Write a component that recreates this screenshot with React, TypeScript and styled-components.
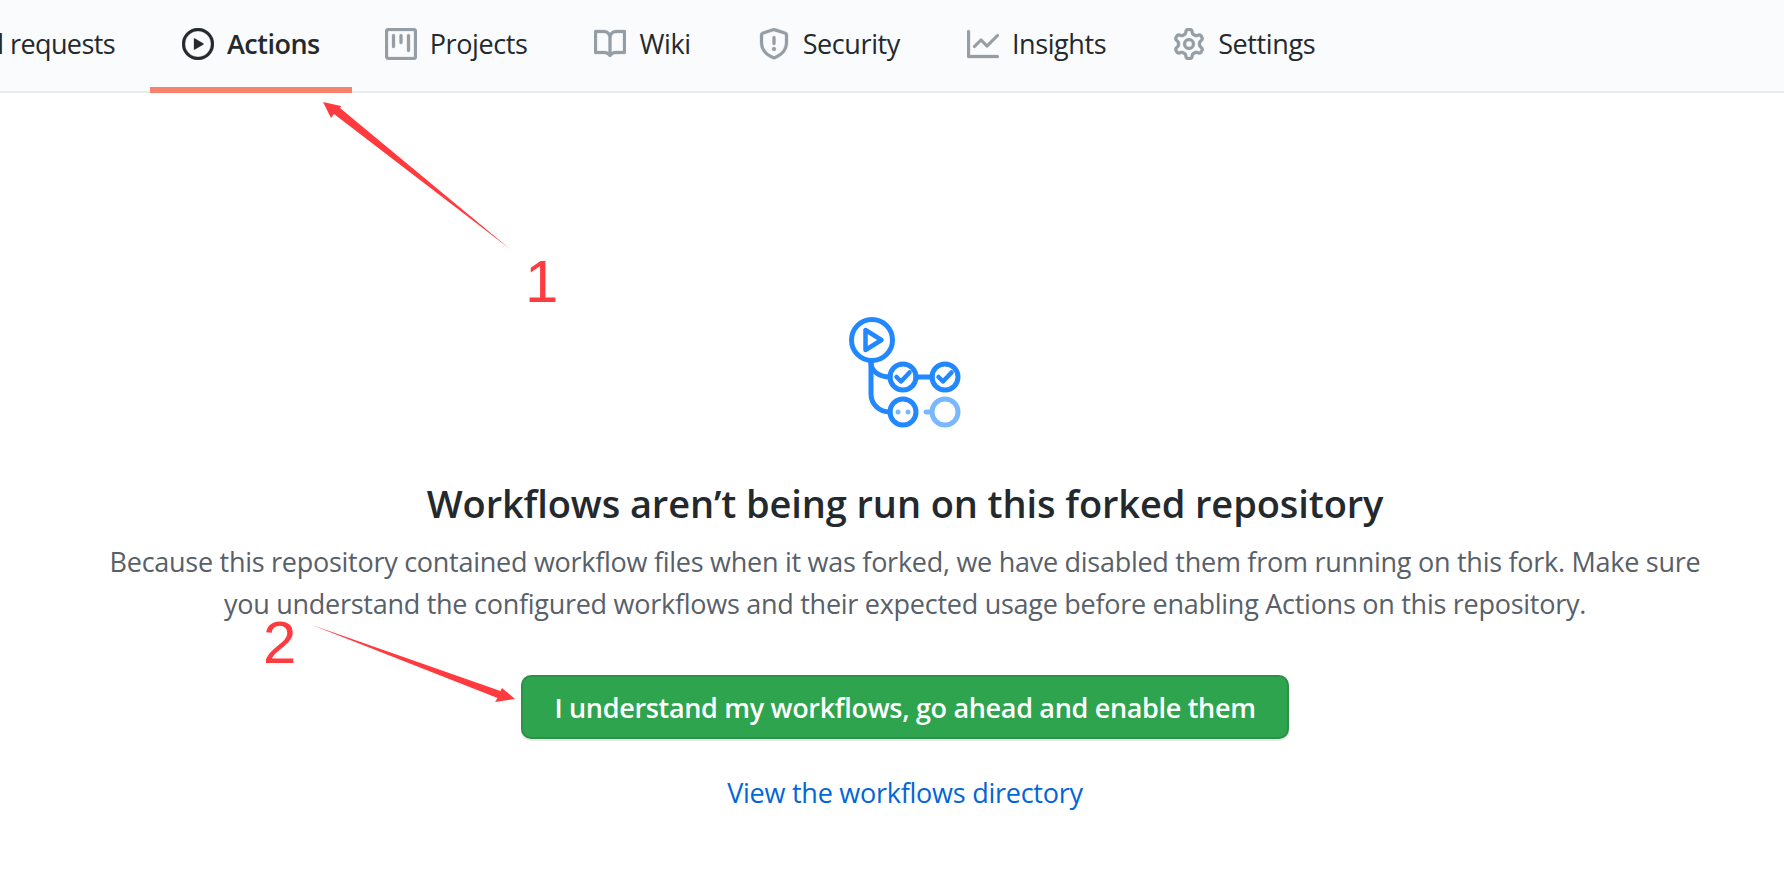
import styled, { createGlobalStyle } from "styled-components";

const GlobalStyle = createGlobalStyle`
  html, body {
    margin: 0;
    padding: 0;
    background: #fff;
  }
  body {
    font-family: "Open Sans", "Noto Sans", sans-serif;
    color: #24292e;
  }
`;

const paths = {
  play: "M1.5 8a6.5 6.5 0 1113 0 6.5 6.5 0 01-13 0zM8 0a8 8 0 100 16A8 8 0 008 0zM6.379 5.227A.25.25 0 006 5.442v5.117a.25.25 0 00.379.214l4.264-2.559a.25.25 0 000-.428L6.379 5.227z",
  project:
    "M1.75 0A1.75 1.75 0 000 1.75v12.5C0 15.216.784 16 1.75 16h12.5A1.75 1.75 0 0016 14.25V1.75A1.75 1.75 0 0014.25 0H1.75zM1.5 1.75a.25.25 0 01.25-.25h12.5a.25.25 0 01.25.25v12.5a.25.25 0 01-.25.25H1.75a.25.25 0 01-.25-.25V1.75zM11.75 3a.75.75 0 00-.75.75v7.5a.75.75 0 001.5 0v-7.5a.75.75 0 00-.75-.75zm-8.25.75a.75.75 0 011.5 0v5.5a.75.75 0 01-1.5 0v-5.5zM8 3a.75.75 0 00-.75.75v3.5a.75.75 0 001.5 0v-3.5A.75.75 0 008 3z",
  book: "M0 1.75A.75.75 0 01.75 1h4.253c1.227 0 2.317.59 3 1.501A3.744 3.744 0 0111.006 1h4.245a.75.75 0 01.75.75v10.5a.75.75 0 01-.75.75h-4.507a2.25 2.25 0 00-1.591.659l-.622.621a.75.75 0 01-1.06 0l-.622-.621A2.25 2.25 0 005.258 13H.75a.75.75 0 01-.75-.75V1.75zm8.755 3a2.25 2.25 0 012.25-2.25H14.5v9h-3.757c-.71 0-1.4.201-1.992.572l.004-7.322zm-1.504 7.324l.004-5.073-.002-2.253A2.25 2.25 0 005.003 2.5H1.5v9h3.757a3.75 3.75 0 011.994.574z",
  shield:
    "M7.467.133a1.75 1.75 0 011.066 0l5.25 1.68A1.75 1.75 0 0115 3.48V7c0 1.566-.32 3.182-1.303 4.682-.983 1.498-2.585 2.813-5.032 3.855a1.7 1.7 0 01-1.33 0c-2.447-1.042-4.049-2.357-5.032-3.855C1.32 10.182 1 8.566 1 7V3.48a1.75 1.75 0 011.217-1.667l5.25-1.68zm.61 1.429a.25.25 0 00-.153 0l-5.25 1.68a.25.25 0 00-.174.238V7c0 1.358.275 2.666 1.057 3.86.784 1.194 2.121 2.34 4.366 3.297a.2.2 0 00.154 0c2.245-.956 3.582-2.104 4.366-3.298C13.225 9.666 13.5 8.36 13.5 7V3.48a.25.25 0 00-.174-.237l-5.25-1.68zM9 10.5a1 1 0 11-2 0 1 1 0 012 0zm-.25-5.75a.75.75 0 10-1.5 0v3a.75.75 0 001.5 0v-3z",
  graph:
    "M1.5 1.75a.75.75 0 00-1.5 0v12.5c0 .414.336.75.75.75h14.5a.75.75 0 000-1.5H1.5V1.75zm14.28 2.53a.75.75 0 00-1.06-1.06L10 7.94 7.53 5.47a.75.75 0 00-1.06 0L3.22 8.72a.75.75 0 001.06 1.06L7 7.06l2.47 2.47a.75.75 0 001.06 0l5.25-5.25z",
  gear: "M7.429 1.525a6.593 6.593 0 011.142 0c.036.003.108.036.137.146l.289 1.105c.147.56.55.967.997 1.189.174.086.341.183.501.29.417.278.97.423 1.53.27l1.102-.303c.11-.03.175.016.195.046.219.31.41.641.573.989.014.031.022.11-.059.19l-.815.806c-.411.406-.562.957-.53 1.456a4.588 4.588 0 010 .582c-.032.499.119 1.05.53 1.456l.815.806c.08.08.073.159.059.19a6.494 6.494 0 01-.573.99c-.02.029-.086.074-.195.045l-1.103-.303c-.559-.153-1.112-.008-1.529.27-.16.107-.327.204-.5.29-.449.222-.851.628-.998 1.189l-.289 1.105c-.029.11-.101.143-.137.146a6.613 6.613 0 01-1.142 0c-.036-.003-.108-.037-.137-.146l-.289-1.105c-.147-.56-.55-.967-.997-1.189a4.502 4.502 0 01-.501-.29c-.417-.278-.97-.423-1.53-.27l-1.102.303c-.11.03-.175-.016-.195-.046a6.492 6.492 0 01-.573-.989c-.014-.031-.022-.11.059-.19l.815-.806c.411-.406.562-.957.53-1.456a4.587 4.587 0 010-.582c.032-.499-.119-1.05-.53-1.456l-.815-.806c-.08-.08-.073-.159-.059-.19a6.44 6.44 0 01.573-.99c.02-.029.086-.075.195-.045l1.103.303c.559.153 1.112.008 1.529-.27.16-.107.327-.204.5-.29.449-.222.851-.628.998-1.189l.289-1.105c.029-.11.101-.143.137-.146zM8 0c-.236 0-.47.01-.701.03-.743.065-1.29.615-1.458 1.261l-.29 1.106c-.017.066-.078.158-.211.224a5.994 5.994 0 00-.668.386c-.123.082-.233.09-.3.071L3.27 2.776c-.644-.177-1.392.02-1.82.63a7.977 7.977 0 00-.704 1.217c-.315.675-.111 1.422.363 1.891l.815.806c.05.048.098.147.088.294a6.084 6.084 0 000 .772c.01.147-.038.246-.088.294l-.815.806c-.474.469-.678 1.216-.363 1.891.2.428.436.835.704 1.218.428.609 1.176.806 1.82.63l1.103-.303c.066-.019.176-.011.299.071.213.143.436.272.668.386.133.066.194.158.212.224l.289 1.106c.169.646.715 1.196 1.458 1.26a8.094 8.094 0 001.402 0c.743-.064 1.29-.614 1.458-1.26l.29-1.106c.017-.066.078-.158.211-.224a5.98 5.98 0 00.668-.386c.123-.082.233-.09.3-.071l1.102.302c.644.177 1.392-.02 1.82-.63.268-.382.505-.789.704-1.217.315-.675.111-1.422-.364-1.891l-.814-.806c-.05-.048-.098-.147-.088-.294a6.1 6.1 0 000-.772c-.01-.147.039-.246.088-.294l.814-.806c.475-.469.679-1.216.364-1.891a7.992 7.992 0 00-.704-1.218c-.428-.609-1.176-.806-1.82-.63l-1.103.303c-.066.019-.176.011-.299-.071a5.991 5.991 0 00-.668-.386c-.133-.066-.194-.158-.212-.224L10.16 1.29C9.99.645 9.444.095 8.701.031A8.094 8.094 0 008 0zm1.5 8a1.5 1.5 0 11-3 0 1.5 1.5 0 013 0zM11 8a3 3 0 11-6 0 3 3 0 016 0z",
};

const Page = styled.div`
  position: relative;
  width: 1784px;
  height: 880px;
  overflow: hidden;
`;

const TabBar = styled.nav`
  display: flex;
  height: 91px;
  background: #fafbfc;
  border-bottom: 2px solid #e9ebef;
`;

const ClippedTab = styled.div`
  flex: 0 0 150px;
  display: flex;
  justify-content: flex-end;
  align-items: center;
  overflow: hidden;
  height: 87px;
  padding-right: 35px;
  box-sizing: border-box;
  white-space: nowrap;
  font-size: 27px;
  letter-spacing: -0.6px;
`;

const Tab = styled.a<{ $active?: boolean }>`
  display: flex;
  align-items: center;
  gap: 13px;
  height: 87px;
  padding: 0 ${(p) => (p.$active ? 32 : 34)}px 0 32px;
  white-space: nowrap;
  font-size: 27px;
  letter-spacing: ${(p) => (p.$active ? "-0.5px" : "-0.4px")};
  font-weight: ${(p) => (p.$active ? 600 : 400)};
  color: #24292e;
  border-bottom: 6px solid ${(p) => (p.$active ? "#f9826c" : "transparent")};
  margin-bottom: -2px;
  & + & {
    margin-left: 1px;
  }
  svg {
    flex: none;
    color: ${(p) => (p.$active ? "#24292e" : "#959da5")};
  }
`;

const Main = styled.main`
  width: 1810px;
  padding-top: 224px;
  display: flex;
  flex-direction: column;
  align-items: center;
  text-align: center;
`;

const Logo = styled.svg`
  width: 112px;
  height: 112px;
  display: block;
`;

const Heading = styled.h2`
  margin: 44px 0 0;
  font-size: 38px;
  line-height: 60px;
  font-weight: 600;
  letter-spacing: -0.1px;
`;

const Description = styled.p`
  margin: 8px 0 0;
  width: 1610px;
  font-size: 27px;
  line-height: 42px;
  letter-spacing: -0.27px;
  color: #586069;
`;

const EnableButton = styled.button`
  margin-top: 50px;
  width: 768px;
  height: 64px;
  border: 2px solid rgba(27, 31, 35, 0.15);
  border-radius: 10px;
  background: #2ea44f;
  color: #fff;
  font-family: inherit;
  font-size: 27px;
  font-weight: 600;
  letter-spacing: -0.32px;
  box-shadow: 0 2px 0 rgba(27, 31, 35, 0.1);
`;

const DirectoryLink = styled.a`
  margin-top: 33px;
  font-size: 27px;
  line-height: 42px;
  letter-spacing: -0.25px;
  color: #0366d6;
`;

const Annotations = styled.svg`
  position: absolute;
  top: 0;
  left: 0;
  width: 1784px;
  height: 880px;
  pointer-events: none;
`;

const StepNumber = styled.span<{ $left: number; $top: number }>`
  position: absolute;
  left: ${(p) => p.$left}px;
  top: ${(p) => p.$top}px;
  font-family: "Liberation Sans", Arial, sans-serif;
  font-size: 60px;
  line-height: 60px;
  color: #ff3b3f;
`;

function NavIcon({ d }: { d: string }) {
  return (
    <svg width="32" height="32" viewBox="0 0 16 16" fill="currentColor" stroke="currentColor" strokeWidth="0.15">
      <path fillRule="evenodd" d={d} />
    </svg>
  );
}

function WorkflowLogo() {
  return (
    <Logo viewBox="0 0 112 112" fill="none" strokeWidth="5" strokeLinecap="round" strokeLinejoin="round">
      <g stroke="#2188ff">
        <circle cx="23" cy="23" r="20.5" />
        <path d="M16.5 13v20l16-10z" strokeWidth="4.5" />
        <path d="M22 46v31c0 10 8 18 19 18" />
        <path d="M22 46c0 8 8 14 19 14" />
        <circle cx="54" cy="60" r="13" />
        <circle cx="96" cy="60" r="13" />
        <circle cx="54" cy="95" r="13" />
        <path d="M67 60h16" />
        <path d="M47.5 60l4.5 4.5 8.5-9M89.5 60l4.5 4.5 8.5-9" strokeWidth="4.5" />
      </g>
      <g fill="#79b8ff">
        <circle cx="49" cy="95" r="2.5" />
        <circle cx="59" cy="95" r="2.5" />
      </g>
      <g stroke="#79b8ff">
        <circle cx="96" cy="95" r="13" />
        <path d="M77 95h3" />
      </g>
    </Logo>
  );
}

export default function App() {
  return (
    <Page>
      <GlobalStyle />
      <TabBar>
        <ClippedTab>Pull requests</ClippedTab>
        <Tab $active>
          <NavIcon d={paths.play} />
          Actions
        </Tab>
        <Tab>
          <NavIcon d={paths.project} />
          Projects
        </Tab>
        <Tab>
          <NavIcon d={paths.book} />
          Wiki
        </Tab>
        <Tab>
          <NavIcon d={paths.shield} />
          Security
        </Tab>
        <Tab>
          <NavIcon d={paths.graph} />
          Insights
        </Tab>
        <Tab>
          <NavIcon d={paths.gear} />
          Settings
        </Tab>
      </TabBar>

      <Main>
        <WorkflowLogo />
        <Heading>Workflows aren’t being run on this forked repository</Heading>
        <Description>
          Because this repository contained workflow files when it was forked, we have disabled them from running on
          this fork. Make sure you understand the configured workflows and their expected usage before enabling Actions
          on this repository.
        </Description>
        <EnableButton>I understand my workflows, go ahead and enable them</EnableButton>
        <DirectoryLink>View the workflows directory</DirectoryLink>
      </Main>

      <Annotations viewBox="0 0 1784 880">
        <polygon fill="#ff3b3f" points="510,249 334,114 331,118 323,102 341,106 340,108" />
        <polygon fill="#ff3b3f" points="312,625 497.5,698 495,702 515,699 502,688 500.5,691" />
      </Annotations>
      <StepNumber $left={525} $top={252}>
        1
      </StepNumber>
      <StepNumber $left={263} $top={613}>
        2
      </StepNumber>
    </Page>
  );
}
